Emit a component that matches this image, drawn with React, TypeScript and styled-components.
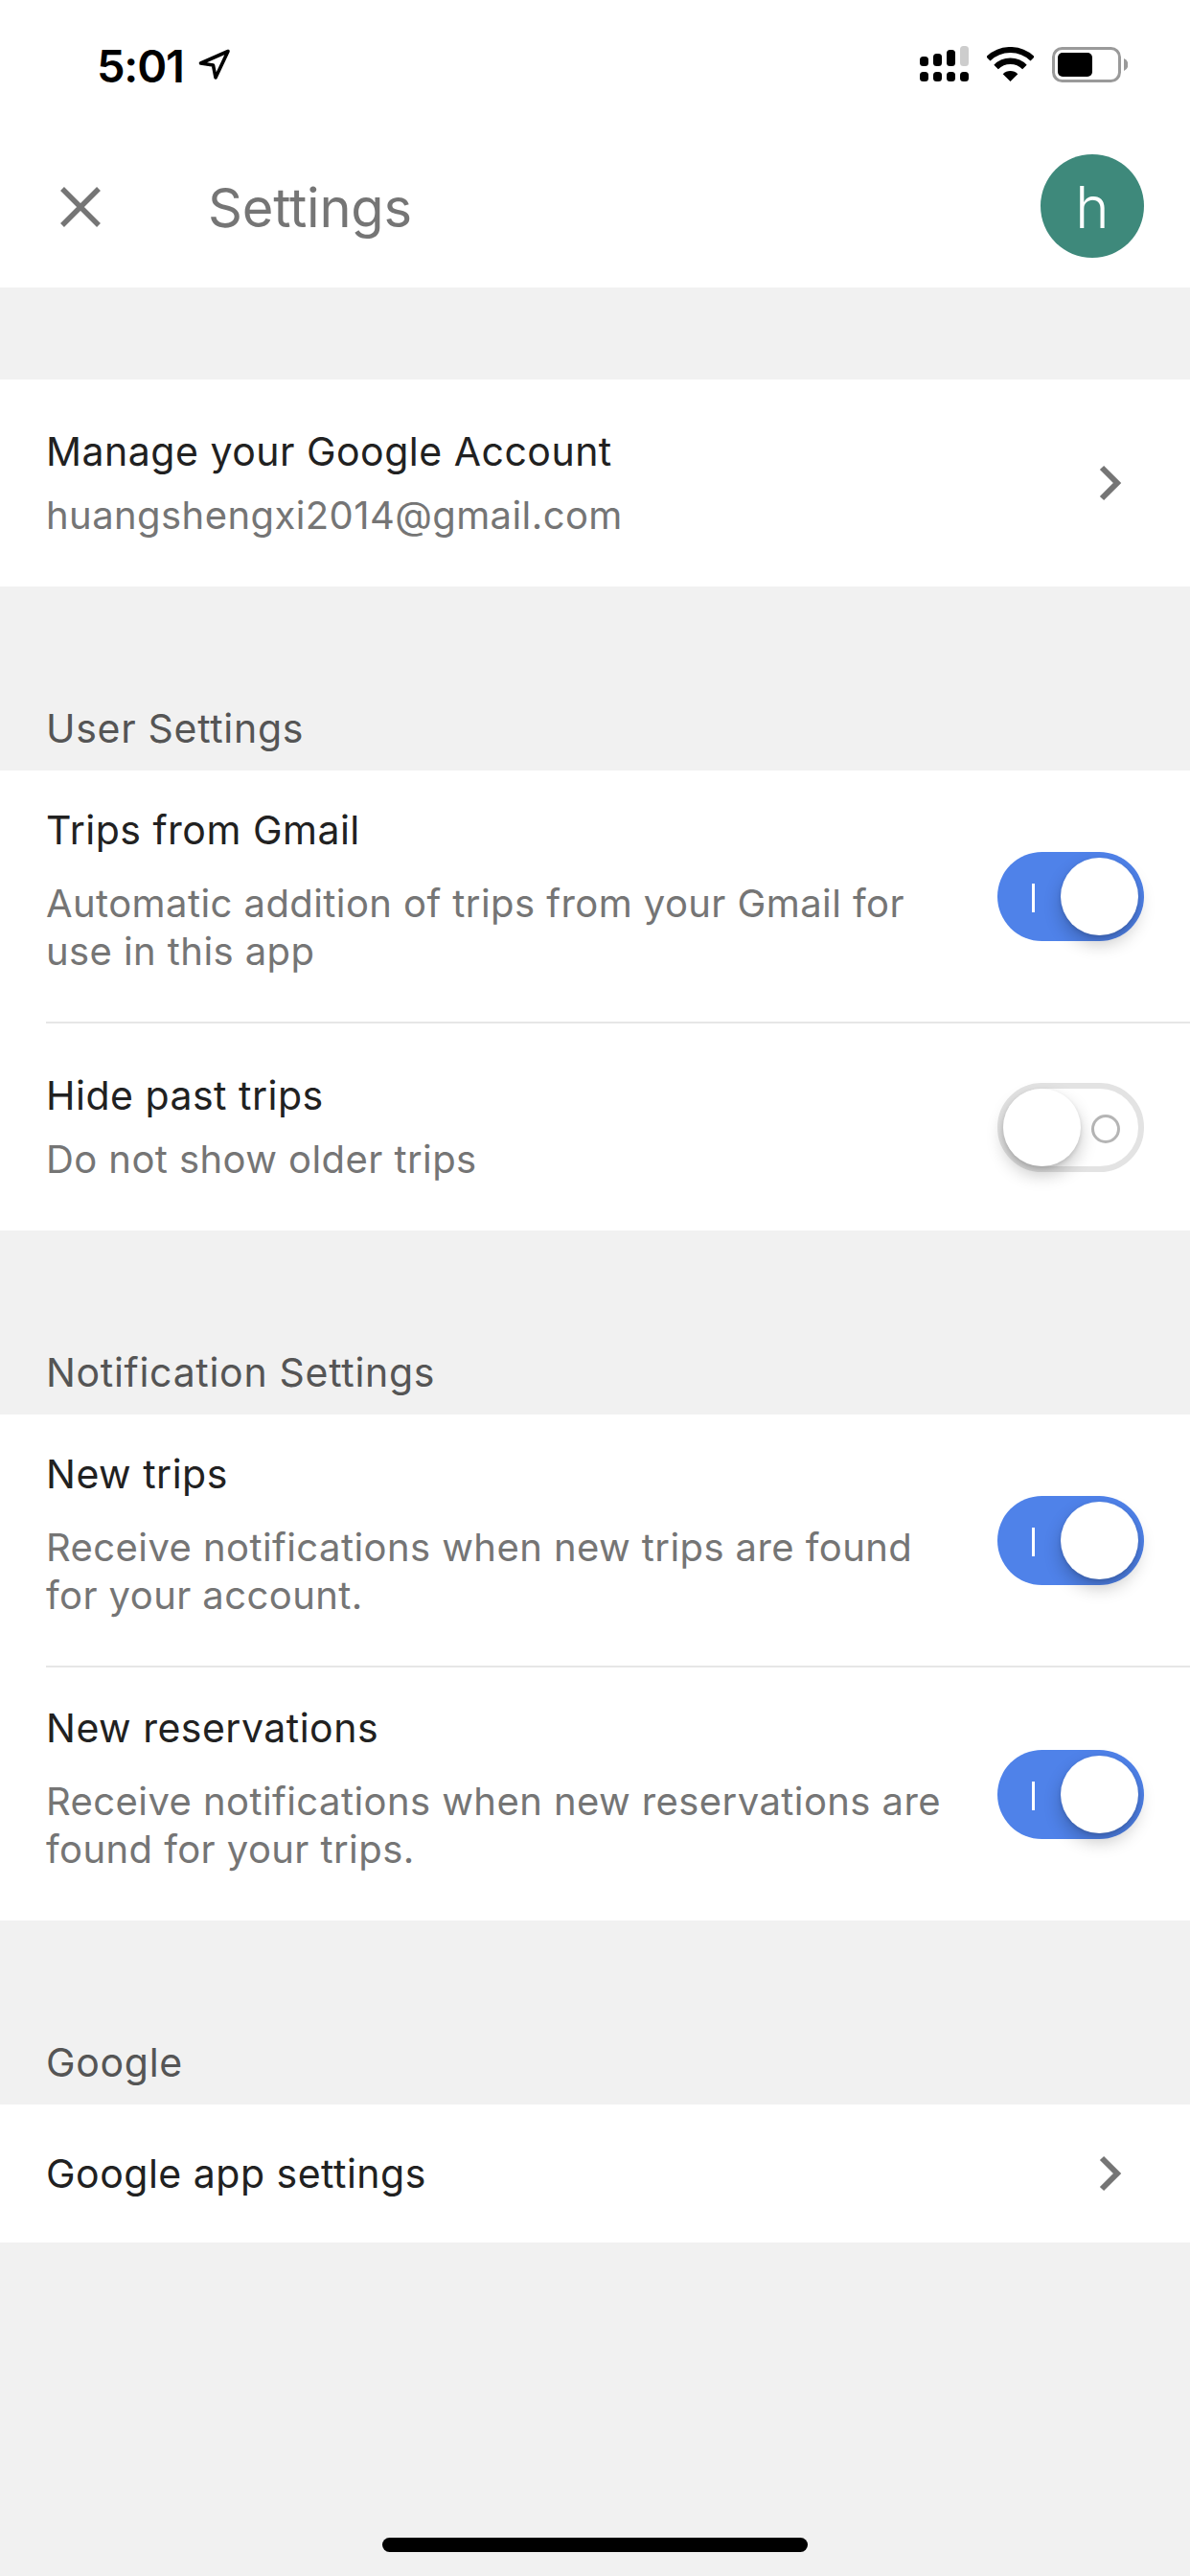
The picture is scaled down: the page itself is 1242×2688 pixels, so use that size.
import styled, { createGlobalStyle } from 'styled-components';

const GlobalStyle = createGlobalStyle`
    html, body {
        margin: 0;
        padding: 0;
        background: #f1f1f1;
    }
    * {
        box-sizing: border-box;
    }
`;

const Page = styled.div`
    width: 1242px;
    height: 2688px;
    display: flex;
    flex-direction: column;
    overflow: hidden;
    background: #f1f1f1;
    font-family: Inter, 'Liberation Sans', sans-serif;
`;

const TopArea = styled.header`
    background: #fff;
    height: 300px;
    display: flex;
    flex-direction: column;
`;

const StatusBar = styled.div`
    height: 132px;
    padding: 48px 65px 0 101px;
    display: flex;
    align-items: flex-start;
    justify-content: space-between;
`;

const TimeGroup = styled.div`
    display: flex;
    align-items: flex-start;
    gap: 15px;
`;

const Time = styled.span`
    font-size: 47px;
    line-height: 42px;
    font-weight: 600;
    letter-spacing: -1.2px;
    color: #000;
`;

const StatusIcons = styled.div`
    display: flex;
    align-items: flex-start;
    gap: 19px;
`;

const AppBar = styled.div`
    flex: 1;
    display: flex;
    align-items: center;
    padding: 0 48px 0 63px;
    margin-top: -2px;
`;

const CloseButton = styled.svg`
    width: 42px;
    height: 42px;
    margin: 2px 112px 0 0;
    flex-shrink: 0;
`;

const Title = styled.h1`
    flex: 1;
    margin: 0;
    padding-top: 4px;
    font-size: 56px;
    line-height: 70px;
    font-weight: 400;
    letter-spacing: -0.2px;
    color: #757575;
`;

const Avatar = styled.div`
    width: 108px;
    height: 108px;
    padding-top: 2px;
    border-radius: 50%;
    background: #3e897b;
    color: #fff;
    display: flex;
    align-items: center;
    justify-content: center;
    font-size: 60px;
    font-weight: 300;
`;

const Card = styled.section`
    background: #fff;
`;

const TopGap = styled.div`
    height: 96px;
`;

const SectionLabel = styled.h2`
    height: 192px;
    margin: 0;
    padding: 0 48px 19px;
    display: flex;
    align-items: flex-end;
    font-size: 41px;
    line-height: 50px;
    font-weight: 400;
    letter-spacing: 0.7px;
    color: #555;
`;

const Row = styled.div<{ $height: number; $divided?: boolean }>`
    height: ${(p) => p.$height}px;
    margin-left: 48px;
    padding-right: 48px;
    display: flex;
    align-items: center;
    justify-content: space-between;
    border-bottom: ${(p) => (p.$divided ? '2px solid #e6e6e6' : 'none')};
`;

const RowText = styled.div<{ $tall?: boolean }>`
    display: flex;
    flex-direction: column;
    gap: ${(p) => (p.$tall ? '27px' : '17px')};
    margin-bottom: ${(p) => (p.$tall ? '12px' : '0')};
`;

const RowTitle = styled.div`
    font-size: 41px;
    line-height: 50px;
    font-weight: 400;
    letter-spacing: 0.5px;
    color: #212121;
`;

const RowSub = styled.div`
    font-size: 40px;
    line-height: 50px;
    font-weight: 400;
    letter-spacing: 0.42px;
    color: #757575;
`;

const Chevron = styled.svg`
    width: 28px;
    height: 40px;
    margin-right: 21px;
    flex-shrink: 0;
`;

const ToggleTrack = styled.div<{ $on: boolean }>`
    position: relative;
    width: 153px;
    height: 93px;
    flex-shrink: 0;
    border-radius: 47px;
    background: ${(p) => (p.$on ? '#4f82e9' : '#fff')};
    border: ${(p) => (p.$on ? 'none' : '6px solid #e3e3e3')};
`;

const ToggleKnob = styled.div<{ $on: boolean }>`
    position: absolute;
    top: ${(p) => (p.$on ? '6px' : '0')};
    left: ${(p) => (p.$on ? '66px' : '0')};
    width: 81px;
    height: 81px;
    border-radius: 50%;
    background: #fff;
    box-shadow: 0 9px 18px rgba(0, 0, 0, 0.22), 0 2px 4px rgba(0, 0, 0, 0.12);
`;

const OnMark = styled.div`
    position: absolute;
    left: 36px;
    top: 33px;
    width: 3px;
    height: 30px;
    background: #fff;
`;

const OffMark = styled.div`
    position: absolute;
    left: 92px;
    top: 27px;
    width: 30px;
    height: 30px;
    border: 3px solid #b5b5b5;
    border-radius: 50%;
`;

const HomeIndicator = styled.div`
    width: 444px;
    height: 15px;
    margin: auto auto 25px;
    border-radius: 8px;
    background: #000;
`;

function Toggle({ on }: { on: boolean }) {
    return (
        <ToggleTrack $on={on}>
            {on ? <OnMark /> : <OffMark />}
            <ToggleKnob $on={on} />
        </ToggleTrack>
    );
}

function RowChevron() {
    return (
        <Chevron viewBox="0 0 28 40">
            <path d="M5 4 L21 20 L5 36" fill="none" stroke="#757575" strokeWidth="6" />
        </Chevron>
    );
}

function LocationArrow() {
    return (
        <svg width="34" height="33" viewBox="0 0 34 33" style={{ marginTop: 3 }}>
            <path
                d="M31 2.5 L2.5 15 L15.5 17 L18 30 Z"
                fill="none"
                stroke="#000"
                strokeWidth="3.6"
                strokeLinejoin="round"
            />
        </svg>
    );
}

function SignalIcon() {
    const tops = [11, 8, 4, 0];
    return (
        <svg width="51" height="37" viewBox="0 0 51 37">
            {tops.map((top, i) => (
                <g key={i}>
                    <rect
                        x={i * 14}
                        y={top}
                        width="9"
                        height={21 - top}
                        rx="3.5"
                        fill={i === 3 ? '#cdcdcd' : '#000'}
                    />
                    <rect x={i * 14} y="27" width="9" height="10" rx="3.5" fill="#000" />
                </g>
            ))}
        </svg>
    );
}

function WifiIcon() {
    return (
        <svg width="49" height="36" viewBox="0 0 49 36" style={{ marginTop: 1 }}>
            <path d="M1.4 12.4 A33 33 0 0 1 47.6 12.4" fill="none" stroke="#000" strokeWidth="6" />
            <path d="M9.6 20.9 A21 21 0 0 1 39.4 20.9" fill="none" stroke="#000" strokeWidth="6.4" />
            <path d="M24.5 36 L16.7 28.2 A11 11 0 0 1 32.3 28.2 Z" fill="#000" />
        </svg>
    );
}

function BatteryIcon() {
    return (
        <svg width="79" height="37" viewBox="0 0 79 37" style={{ marginTop: 1 }}>
            <rect x="1.5" y="1.5" width="69" height="34" rx="9" fill="none" stroke="#9a9a9a" strokeWidth="3" />
            <rect x="6" y="6" width="36" height="25" rx="5" fill="#000" />
            <path d="M75 12 A7 7 0 0 1 75 25 Z" fill="#9a9a9a" />
        </svg>
    );
}

export default function App() {
    return (
        <>
            <GlobalStyle />
            <Page>
                <TopArea>
                    <StatusBar>
                        <TimeGroup>
                            <Time>5:01</Time>
                            <LocationArrow />
                        </TimeGroup>
                        <StatusIcons>
                            <SignalIcon />
                            <WifiIcon />
                            <BatteryIcon />
                        </StatusIcons>
                    </StatusBar>
                    <AppBar>
                        <CloseButton viewBox="0 0 42 42">
                            <path d="M2 2 L40 40 M40 2 L2 40" stroke="#757575" strokeWidth="5.5" fill="none" />
                        </CloseButton>
                        <Title>Settings</Title>
                        <Avatar>h</Avatar>
                    </AppBar>
                </TopArea>

                <TopGap />
                <Card>
                    <Row $height={216}>
                        <RowText>
                            <RowTitle>Manage your Google Account</RowTitle>
                            <RowSub>huangshengxi2014@gmail.com</RowSub>
                        </RowText>
                        <RowChevron />
                    </Row>
                </Card>

                <SectionLabel>User Settings</SectionLabel>
                <Card>
                    <Row $height={264} $divided>
                        <RowText $tall>
                            <RowTitle>Trips from Gmail</RowTitle>
                            <RowSub>
                                Automatic addition of trips from your Gmail for
                                <br />
                                use in this app
                            </RowSub>
                        </RowText>
                        <Toggle on />
                    </Row>
                    <Row $height={216}>
                        <RowText>
                            <RowTitle>Hide past trips</RowTitle>
                            <RowSub>Do not show older trips</RowSub>
                        </RowText>
                        <Toggle on={false} />
                    </Row>
                </Card>

                <SectionLabel>Notification Settings</SectionLabel>
                <Card>
                    <Row $height={264} $divided>
                        <RowText $tall>
                            <RowTitle>New trips</RowTitle>
                            <RowSub>
                                Receive notifications when new trips are found
                                <br />
                                for your account.
                            </RowSub>
                        </RowText>
                        <Toggle on />
                    </Row>
                    <Row $height={264}>
                        <RowText $tall>
                            <RowTitle>New reservations</RowTitle>
                            <RowSub>
                                Receive notifications when new reservations are
                                <br />
                                found for your trips.
                            </RowSub>
                        </RowText>
                        <Toggle on />
                    </Row>
                </Card>

                <SectionLabel>Google</SectionLabel>
                <Card>
                    <Row $height={144}>
                        <RowTitle>Google app settings</RowTitle>
                        <RowChevron />
                    </Row>
                </Card>

                <HomeIndicator />
            </Page>
        </>
    );
}
